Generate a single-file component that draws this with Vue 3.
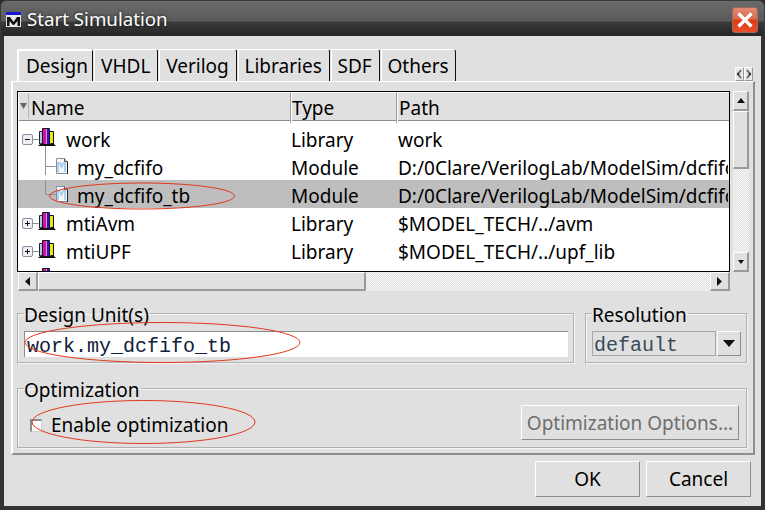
<script setup>
const tabs = ['Design', 'VHDL', 'Verilog', 'Libraries', 'SDF', 'Others']
const rows = [
  { name: 'work', type: 'Library', path: 'work', kind: 'lib', open: true },
  { name: 'my_dcfifo', type: 'Module', path: 'D:/0Clare/VerilogLab/ModelSim/dcfifo', kind: 'mod', stem: 'top' },
  { name: 'my_dcfifo_tb', type: 'Module', path: 'D:/0Clare/VerilogLab/ModelSim/dcfifo', kind: 'mod', stem: 'end', selected: true },
  { name: 'mtiAvm', type: 'Library', path: '$MODEL_TECH/../avm', kind: 'lib' },
  { name: 'mtiUPF', type: 'Library', path: '$MODEL_TECH/../upf_lib', kind: 'lib' },
  { name: '', type: '', path: '', kind: 'lib', bare: true }
]
</script>

<template>
  <div class="window">
    <header class="titlebar">
      <svg class="app-icon" width="16" height="16" viewBox="0 0 16 16">
        <rect x="0" y="0" width="15" height="15" fill="#e8e8e8" />
        <rect x="0" y="0" width="15" height="3" fill="#1616d8" />
        <path d="M1 14V5h3l3.500 5L11 5h3v9h-2.500V9L8 13H7L3.500 9v5z" fill="#111" />
      </svg>
      <span class="title">Start Simulation</span>
      <button class="close" aria-label="Close">
        <svg width="26" height="24" viewBox="0 0 26 24">
          <path d="M6 5l14 14M20 5L6 19" stroke="#fff" stroke-width="3.600" />
        </svg>
      </button>
    </header>

    <div class="client">
      <div class="tabstrip">
        <div v-for="(t, i) in tabs" :key="t" class="tab" :class="{ active: i === 0 }">{{ t }}</div>
        <div class="tab-scroll">
          <span class="ts-btn">
            <svg width="8" height="10" viewBox="0 0 8 10"><path d="M5 0v1H4v1H3v1H2v1H1v2h1v1h1v1h1v1h1v1h1V8H5V7H4V3h1V2h1V0z" fill="#333" /></svg>
          </span>
          <span class="ts-btn">
            <svg width="8" height="10" viewBox="0 0 8 10"><path d="M2 0v2h1v1h1v4H3v1H2v2h1V9h1V8h1V7h1V6h1V4H6V3H5V2H4V1H3V0z" fill="#333" /></svg>
          </span>
        </div>
      </div>

      <section class="panel">
        <div class="list-area">
          <div class="tree">
            <div class="thead">
              <div class="th th-name">
                <span class="sort"><svg width="7" height="6" viewBox="0 0 7 6"><path d="M0 0h7L3.500 6z" fill="#666" /></svg></span>
                <span>Name</span>
              </div>
              <div class="th th-type">Type</div>
              <div class="th th-path">Path</div>
            </div>
            <div class="tbody">
              <div v-for="(r, i) in rows" :key="i" class="row" :class="{ selected: r.selected }">
                <div class="cell cell-name">
                  <svg v-if="r.kind === 'lib'" class="node" width="44" height="28" viewBox="0 0 44 28">
                    <template v-if="!r.bare">
                      <path d="M10.500 15.500h6" stroke="#909090" fill="none" />
                      <path v-if="r.open" d="M23.500 22v6" stroke="#909090" fill="none" />
                      <rect x="0.500" y="10.500" width="10" height="10" rx="1.500" fill="#eef0f6" stroke="#8a90a4" />
                      <path d="M3 15.500h5" stroke="#111" />
                      <path v-if="!r.open" d="M5.500 13v5" stroke="#111" />
                    </template>
                    <rect x="18" y="8" width="3" height="12" fill="#a6cdea" />
                    <path d="M17.500 20V7.500h3.500" stroke="#222" fill="none" />
                    <rect x="21" y="5" width="3.500" height="15" fill="#e0109a" />
                    <path d="M20.500 20V4.500h7V20" stroke="#111" fill="none" />
                    <rect x="25" y="5" width="2.500" height="15" fill="#1a1ad0" />
                    <rect x="28" y="8" width="3" height="12" fill="#f5e800" />
                    <path d="M27.500 7.500h4V20" stroke="#111" fill="none" />
                    <path d="M16 22l3-3h2l1 1h6l1-1h2l3 3z" fill="#111" />
                  </svg>
                  <svg v-else class="node child" width="55" height="28" viewBox="0 0 55 28">
                    <path v-if="r.stem === 'top'" d="M23.500 0v23M23.500 14.500h10" stroke="#909090" fill="none" />
                    <path v-else d="M23.500 0v14.500h10" stroke="#909090" fill="none" />
                    <path d="M34.500 6.500h8l3 3v12h-11z" fill="#f4f6fb" stroke="#8a90a4" />
                    <path d="M42.500 6.500v3h3" fill="#d8dce8" stroke="#505058" />
                    <path d="M45.500 10v12" stroke="#222" />
                    <path d="M36 20v-9h1.800l1.700 4 1.700-4H43v9" fill="none" stroke="#9cc8ec" stroke-width="1.600" />
                  </svg>
                  <span class="label">{{ r.name }}</span>
                </div>
                <div class="cell cell-type">{{ r.type }}</div>
                <div class="cell cell-path">{{ r.path }}</div>
              </div>
            </div>
          </div>

          <div class="vbar">
            <span class="sb-btn"><svg width="8" height="5" viewBox="0 0 8 5"><path d="M0 5h8L4 0z" fill="#111" /></svg></span>
            <span class="sb-thumb-v"></span>
            <span class="trough"></span>
            <span class="sb-btn"><svg width="6" height="4" viewBox="0 0 6 4"><path d="M0 0h6L3 4z" fill="#111" /></svg></span>
          </div>

          <div class="hbar">
            <span class="sb-btn wide"><svg width="5" height="9" viewBox="0 0 5 9"><path d="M5 0v9L0 4.500z" fill="#111" /></svg></span>
            <span class="sb-thumb-h"></span>
            <span class="trough"></span>
            <span class="sb-btn wide"><svg width="5" height="9" viewBox="0 0 5 9"><path d="M0 0v9l5-4.500z" fill="#111" /></svg></span>
          </div>
        </div>

        <div class="unit-row">
          <fieldset class="group unit">
            <legend>Design Unit(s)</legend>
            <div class="input mono">work.my_dcfifo_tb</div>
          </fieldset>
          <fieldset class="group resolution">
            <legend>Resolution</legend>
            <div class="res-line">
              <div class="select mono">default</div>
              <span class="drop"><svg width="12" height="7" viewBox="0 0 12 7"><path d="M0 0h12L6 7z" fill="#111" /></svg></span>
            </div>
          </fieldset>
        </div>

        <fieldset class="group optim">
          <legend>Optimization</legend>
          <div class="opt-line">
            <label class="check"><span class="box"></span><span>Enable optimization</span></label>
            <button class="btn opt-btn" disabled>Optimization Options...</button>
          </div>
        </fieldset>
      </section>

      <footer class="actions">
        <button class="btn action">OK</button>
        <button class="btn action">Cancel</button>
      </footer>
    </div>

    <svg class="marks" width="765" height="510" viewBox="0 0 765 510">
      <ellipse cx="142" cy="196" rx="92.500" ry="13" />
      <ellipse cx="162.500" cy="342.500" rx="137.500" ry="20" />
      <ellipse cx="143.500" cy="422" rx="111.500" ry="21.500" />
    </svg>
  </div>
</template>

<style>
html, body { margin: 0; padding: 0; background: #2a2a2a; }
</style>

<style scoped>
* { box-sizing: border-box; }
.window {
  position: relative;
  width: 765px;
  height: 510px;
  overflow: hidden;
  display: flex;
  flex-direction: column;
  background: #333;
  border-radius: 6px 6px 0 0;
  font-family: "Noto Sans", "Open Sans", sans-serif;
  font-size: 19px;
  color: #000;
}
.titlebar {
  flex: none;
  height: 36px;
  display: flex;
  align-items: center;
  padding: 0 6px 0 5px;
  border: 1px solid #3a3a3a;
  border-bottom: 0;
  border-radius: 6px 6px 0 0;
  background: linear-gradient(#6a6a6a 0, #5a5a5a 20px, #3a3a3a 21px, #262626 35px);
}
.app-icon { flex: none; margin-top: 3px; }
.title {
  margin-left: 5px;
  color: #fff;
  font-size: 18.700px;
  text-shadow: 0 0 3px #111;
}
.close {
  margin-left: auto;
  margin-top: 2px;
  width: 26px;
  height: 26px;
  padding: 0;
  display: flex;
  align-items: center;
  justify-content: center;
  border: 1px solid #9a6a60;
  border-radius: 3px;
  background: linear-gradient(#e08a74 0, #d86a50 11px, #e03a12 12px, #e8502c 24px);
}
.client {
  flex: 1;
  margin: 0 4px 4px;
  background: #e0e0e0;
  display: flex;
  flex-direction: column;
  padding: 13px 0 0 7px;
}
.tabstrip {
  flex: none;
  height: 32px;
  display: flex;
  align-items: flex-end;
  padding-left: 6px;
  position: relative;
}
.tab {
  height: 32px;
  padding: 0 6.800px 0 6px;
  line-height: 32px;
  border-top: 1px solid #fff;
  border-left: 1px solid #fff;
  border-right: 1px solid #111;
  border-top-right-radius: 3px;
  margin-right: 1px;
  white-space: nowrap;
  margin-top: 1px;
}
.tab.active {
  margin-top: 0;
  padding: 0 4px 0 7px;
  line-height: 30px;
  border-top-width: 2px;
  border-left-width: 2px;
  position: relative;
  z-index: 1;
}
.tab-scroll {
  position: absolute;
  left: 724px;
  bottom: 0;
  display: flex;
}
.ts-btn {
  width: 9px;
  height: 14px;
  display: flex;
  align-items: center;
  justify-content: center;
  background: #e8e8e8;
  border-right: 1px solid #999;
  border-bottom: 1px solid #999;
  border-top: 1px solid #fff;
  border-left: 1px solid #fff;
}
.panel {
  flex: none;
  width: 744px;
  height: 374px;
  border-top: 1px solid #fff;
  border-left: 2px solid #fff;
  border-right: 2px solid #8e8e8e;
  border-bottom: 2px solid #8e8e8e;
  padding: 9px 5px 0 4px;
  background: #e0e0e0;
}
.list-area {
  display: grid;
  grid-template-columns: 713px 1fr;
  grid-template-rows: 181px 19px;
}
.tree {
  border: 1px solid #000;
  background: #fff;
  overflow: hidden;
}
.thead {
  height: 29px;
  display: grid;
  grid-template-columns: 273px 106px 1fr;
  border-bottom: 1px solid #8c8c8c;
  background: #e0e0e0;
}
.th {
  border-top: 1px solid #fff;
  border-left: 1px solid #fff;
  border-right: 1px solid #9c9c9c;
  line-height: 30px;
  padding-left: 0;
}
.th-path { padding-left: 1px; border-right: 0; }
.th-name { display: flex; padding-left: 0; }
.sort {
  width: 10px;
  margin-right: 2px;
  flex: none;
  display: flex;
  align-items: center;
  justify-content: center;
  border-right: 1px solid #b8b8b8;
  height: 26px;
}
.tbody { padding-top: 3px; }
.row {
  height: 28px;
  display: grid;
  grid-template-columns: 273px 107px 1fr;
  line-height: 33px;
  white-space: nowrap;
}
.row.selected { background: #bebebe; }
.cell { overflow: hidden; }
.cell-name { display: flex; padding-left: 4px; }
.node { flex: none; display: block; }
.cell-type { padding-left: 0; }
.cell-path { padding-left: 0; margin-right: 1px; }
.vbar {
  width: 16px;
  margin-left: 3px;
  display: flex;
  flex-direction: column;
}
.sb-btn {
  flex: none;
  width: 16px;
  height: 20px;
  display: flex;
  align-items: center;
  justify-content: center;
  background: #e0e0e0;
  border-top: 1px solid #fff;
  border-left: 1px solid #fff;
  border-right: 2px solid #9a9a9a;
  border-bottom: 2px solid #9a9a9a;
}
.sb-btn.wide { width: 20px; height: 19px; }
.sb-thumb-v {
  flex: none;
  height: 58px;
  background: #e0e0e0;
  border-top: 1px solid #fff;
  border-left: 1px solid #fff;
  border-right: 2px solid #9a9a9a;
  border-bottom: 2px solid #9a9a9a;
}
.trough {
  flex: 1;
  background: repeating-conic-gradient(#e0e0e0 0 25%, #f8f8f8 0 50%) 0 0 / 2px 2px;
}
.hbar { display: flex; padding-left: 1px; height: 19px; }
.sb-thumb-h {
  flex: none;
  width: 328px;
  background: #e0e0e0;
  border-top: 1px solid #fff;
  border-left: 1px solid #fff;
  border-right: 2px solid #9a9a9a;
  border-bottom: 2px solid #9a9a9a;
}
.unit-row {
  display: flex;
  gap: 11px;
  margin-top: 9px;
}
.group {
  margin: 0;
  min-width: 0;
  border: 1px solid #b0b0b0;
  box-shadow: inset 1px 1px 0 #f4f4f4, 1px 1px 0 #f4f4f4;
  position: relative;
}
.group legend {
  padding: 0 1px 0 0;
  line-height: 30px;
  height: 26px;
}
.unit { width: 557px; height: 63px; padding: 5px 5px 0 6px; }
.resolution { width: 162px; height: 63px; padding: 5px 5px 0 6px; }
.mono { font-family: "Liberation Mono", monospace; font-size: 20px; }
.input {
  height: 26px;
  line-height: 29px;
  background: #fff;
  border-top: 1px solid #8c8c8c;
  border-left: 1px solid #8c8c8c;
  padding-left: 2px;
  color: #10203a;
  white-space: nowrap;
}
.res-line { display: flex; gap: 1px; }
.select {
  width: 124px;
  height: 25px;
  line-height: 28px;
  border: 1px solid #a8a8a8;
  padding-left: 1px;
  color: #3a4a5a;
}
.drop {
  width: 24px;
  height: 25px;
  display: flex;
  align-items: center;
  justify-content: center;
  border-top: 1px solid #fff;
  border-left: 1px solid #fff;
  border-right: 1px solid #8c8c8c;
  border-bottom: 1px solid #8c8c8c;
}
.optim { width: 730px; height: 73px; margin-top: 12px; padding: 0 7px 0 6px; }
.opt-line { display: flex; align-items: flex-start; justify-content: space-between; padding-left: 6px; }
.check { display: flex; align-items: center; gap: 9px; margin-top: 10px; height: 28px; }
.box {
  width: 12px;
  height: 13px;
  background: #fff;
  border-top: 2px solid #8c8c8c;
  border-left: 2px solid #8c8c8c;
  border-right: 1px solid #d0d0d0;
  border-bottom: 1px solid #d0d0d0;
}
.btn {
  font: inherit;
  color: #000;
  background: #e0e0e0;
  border-top: 1px solid #fff;
  border-left: 1px solid #fff;
  border-right: 1px solid #8c8c8c;
  border-bottom: 1px solid #8c8c8c;
  padding: 0;
  border-radius: 0;
}
.opt-btn { width: 218px; height: 35px; margin-top: 4px; color: #6e6e6e; white-space: nowrap; }
.actions {
  flex: 1;
  display: flex;
  justify-content: flex-end;
  gap: 6px;
  padding: 6px 10px 0 0;
}
.action { width: 105px; height: 36px; }
.marks { position: absolute; left: 0; top: 0; pointer-events: none; }
.marks ellipse { fill: none; stroke: #e0381c; stroke-width: 1; }
</style>
